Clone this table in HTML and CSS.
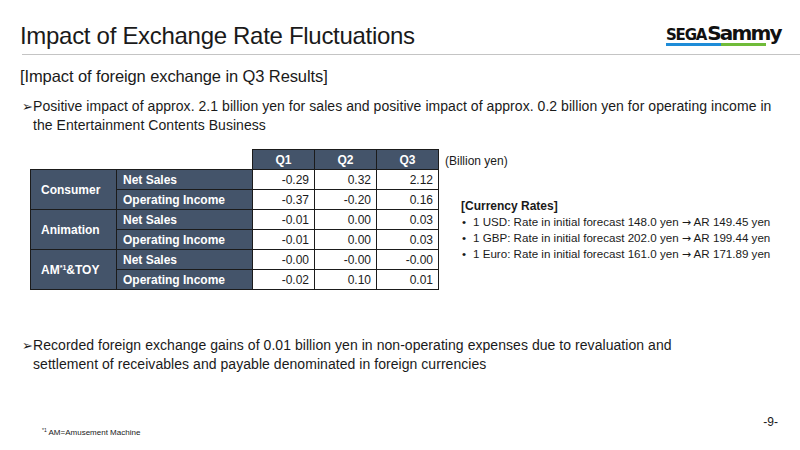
FILE: index.html
```html
<!DOCTYPE html>
<html>
<head>
<meta charset="utf-8">
<link rel="stylesheet" href="styles.css">
</head>
<body>
<div class="page">
  <header class="header">
    <h1 class="title">Impact of Exchange Rate Fluctuations</h1>
    <div class="logo">
      <div class="logo-text"><span class="sega">SEGA</span><span class="sammy">Sammy</span></div>
      <div class="logo-bar"><span class="bar-blue"></span><span class="bar-green"></span></div>
    </div>
  </header>
  <h2 class="subtitle">[Impact of foreign exchange in Q3 Results]</h2>
  <p class="point"><span class="mark">➢</span>Positive impact of approx. 2.1 billion yen for sales and positive impact of approx. 0.2 billion yen for operating income in the Entertainment Contents Business</p>
  <div class="middle">
    <table class="fx">
      <colgroup><col class="c-seg"><col class="c-item"><col class="c-q"><col class="c-q"><col class="c-q"></colgroup>
      <thead>
        <tr><th class="blank"></th><th class="blank"></th><th class="qh">Q1</th><th class="qh">Q2</th><th class="qh">Q3</th></tr>
      </thead>
      <tbody>
        <tr><th class="seg" rowspan="2">Consumer</th><th class="item">Net Sales</th><td>-0.29</td><td>0.32</td><td>2.12</td></tr>
        <tr><th class="item">Operating Income</th><td>-0.37</td><td>-0.20</td><td>0.16</td></tr>
        <tr><th class="seg" rowspan="2">Animation</th><th class="item">Net Sales</th><td>-0.01</td><td>0.00</td><td>0.03</td></tr>
        <tr><th class="item">Operating Income</th><td>-0.01</td><td>0.00</td><td>0.03</td></tr>
        <tr><th class="seg" rowspan="2">AM<sup>*1</sup>&amp;TOY</th><th class="item">Net Sales</th><td>-0.00</td><td>-0.00</td><td>-0.00</td></tr>
        <tr><th class="item">Operating Income</th><td>-0.02</td><td>0.10</td><td>0.01</td></tr>
      </tbody>
    </table>
    <div class="side">
      <div class="unit">(Billion yen)</div>
      <div class="rates">
        <div class="rates-title">[Currency Rates]</div>
        <ul class="rates-list">
          <li>1 USD: Rate in initial forecast 148.0 yen <span class="arrow">→</span> AR 149.45 yen</li>
          <li>1 GBP: Rate in initial forecast 202.0 yen <span class="arrow">→</span> AR 199.44 yen</li>
          <li>1 Euro: Rate in initial forecast 161.0 yen <span class="arrow">→</span> AR 171.89 yen</li>
        </ul>
      </div>
    </div>
  </div>
  <p class="point point2"><span class="mark">➢</span>Recorded foreign exchange gains of 0.01 billion yen in non-operating expenses due to revaluation and settlement of receivables and payable denominated in foreign currencies</p>
  <footer class="footer">
    <div class="note"><sup>*1</sup> AM=Amusement Machine</div>
    <div class="pageno">-9-</div>
  </footer>
</div>
</body>
</html>
```

FILE: styles.css
```css
* { box-sizing: border-box; }
html, body { margin: 0; padding: 0; background: #fff; }
body { font-family: "Liberation Sans", Arial, sans-serif; color: #000; }
.page { width: 800px; height: 450px; overflow: hidden; position: relative; display: flex; flex-direction: column; }

.header { display: flex; justify-content: space-between; align-items: flex-start; margin-left: 22px; padding: 22px 21px 0 0; height: 55px; border-bottom: 1px solid #c4c4c4; }
.title { margin: 0 0 0 -2px; font-size: 24px; font-weight: normal; line-height: 28px; color: #1a1a1a; letter-spacing: -0.3px; }
.logo { width: 113px; margin-top: 2px; }
.logo-text { font-family: "DejaVu Sans", sans-serif; font-weight: bold; line-height: 18px; height: 18px; white-space: nowrap; color: #111; }
.sega { font-size: 15px; letter-spacing: -1.2px; }
.sammy { font-size: 20px; letter-spacing: -1.8px; margin-left: 1px; }
.logo-bar { display: flex; height: 3px; margin-top: 1px; width: 100px; }
.bar-blue { flex: 0 0 55px; background: #1e8cd8; }
.bar-green { flex: 1; background: #70bb3a; }

.subtitle { margin: 11px 0 0 20px; font-size: 16.5px; font-weight: normal; line-height: 20px; color: #1a1a1a; letter-spacing: -0.1px; }
.point { margin: 11px 20px 0 22px; padding-left: 11px; text-indent: -11px; font-size: 14px; line-height: 19px; color: #1a1a1a; letter-spacing: 0.05px; }
.mark { display: inline-block; width: 11px; text-indent: 0; font-family: "DejaVu Sans", sans-serif; font-size: 13px; line-height: 14px; vertical-align: 0; }

.middle { display: flex; margin: 14px 0 0 30px; }
.fx { border-collapse: collapse; table-layout: fixed; width: 408px; font-size: 12px; }
.c-seg { width: 86px; }
.c-item { width: 136px; }
.c-q { width: 62px; }
.fx th, .fx td { height: 20px; padding: 0; line-height: 14px; }
.fx th.blank { border: none; background: transparent; }
.fx th.qh { background: #44546a; color: #fff; font-weight: bold; border: 1px solid #1b1b1b; border-bottom: none; text-align: center; }
.fx th.seg { background: #44546a; color: #fff; font-weight: bold; text-align: left; padding-left: 10px; border: 1px solid #1b1b1b; }
.fx th.item { background: #44546a; color: #fff; font-weight: bold; text-align: left; padding-left: 6px; border: 1px solid #1b1b1b; }
.fx td { text-align: right; padding-right: 5px; border: 1px solid #1b1b1b; color: #1a1a1a; }
.fx sup { font-size: 7px; line-height: 0; vertical-align: 4px; }

.side { margin-left: 6px; font-size: 12px; color: #1a1a1a; }
.unit { margin-top: 5px; line-height: 14px; }
.rates { margin: 31px 0 0 16px; line-height: 15px; }
.rates-title { font-weight: bold; }
.rates-list { list-style: none; margin: 0; padding: 0; font-size: 11.6px; }
.rates-list li { position: relative; padding-left: 12px; white-space: nowrap; }
.rates-list li::before { content: "•"; position: absolute; left: 1px; top: 0; }
.arrow { font-family: "DejaVu Sans", sans-serif; font-size: 11px; }

.point2 { margin-top: 46px; max-width: 700px; }

.footer { margin-top: auto; display: flex; justify-content: space-between; align-items: flex-end; padding: 0 22px 12px 42px; }
.note { font-size: 8px; color: #1a1a1a; line-height: 10px; }
.note sup { font-size: 5px; vertical-align: 3px; line-height: 0; }
.pageno { font-size: 12px; color: #1a1a1a; line-height: 14px; padding-bottom: 9px; }
```
